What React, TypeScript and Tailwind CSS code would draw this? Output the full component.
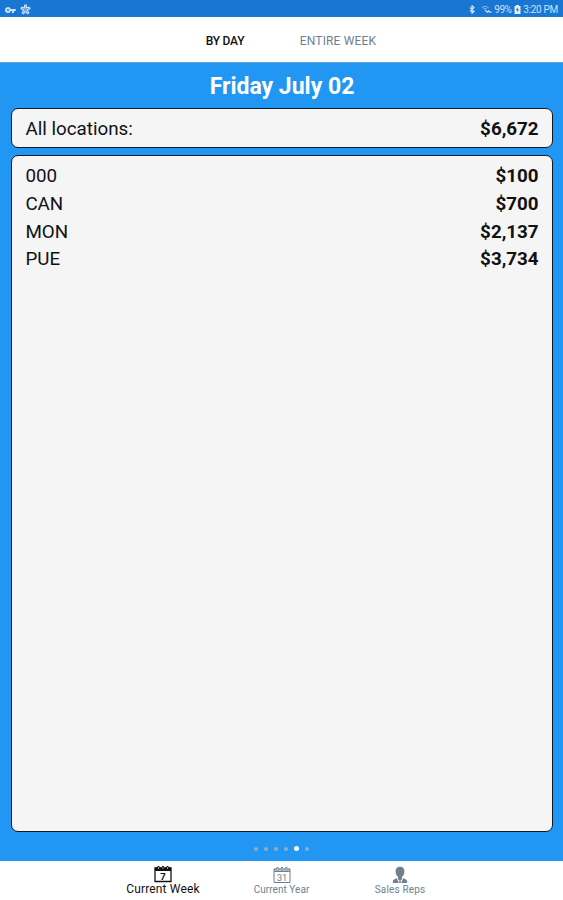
import React from 'react';

const rows: [string, string][] = [
  ['000', '$100'],
  ['CAN', '$700'],
  ['MON', '$2,137'],
  ['PUE', '$3,734'],
];

function StatusBar() {
  return (
    <header className="flex h-[17px] shrink-0 items-center justify-between bg-[#1976d2] px-[5px] pt-[2px] text-[#c9e0f6]">
      <div className="flex items-center gap-[4px]">
        <svg width="11" height="8" viewBox="0 0 11 8" fill="currentColor">
          <path fillRule="evenodd" d="M3 1a3 3 0 1 0 2.8 4H7v2h2V5h1.8V3h-5A3 3 0 0 0 3 1Zm0 2a1 1 0 1 1 0 2 1 1 0 0 1 0-2Z" />
        </svg>
        <svg width="11" height="11" viewBox="0 0 11 11" fill="none" stroke="currentColor" strokeWidth="1.1" strokeLinejoin="round">
          <path d="M4.6 3.6V1h1.8v2.6l3.2-.3.4 1.4-2.7 1.1 1.6 3.1-1.3.9-2.1-2.5-2.1 2.5-1.3-.9 1.6-3.1L1 4.7l.4-1.4Z" fill="currentColor" fillOpacity=".45" />
        </svg>
      </div>
      <div className="flex items-center text-[10px] leading-none">
        <svg className="mr-[6px]" width="6" height="9" viewBox="0 0 6 9" fill="none" stroke="currentColor" strokeWidth="1.2">
          <path d="m1 2.5 4 4-2 1.8V.7l2 1.8-4 4" />
        </svg>
        <svg className="mr-[2px]" width="11" height="9" viewBox="0 0 11 9" fill="none" stroke="currentColor">
          <path d="M.7 2.5Q4 .2 7.5 2.4M2 4.2q2-1.4 4 0" opacity=".65" />
          <path d="m4 5.2 2.5 2 1-1.4 1 1.4h2" strokeWidth="1.2" />
        </svg>
        <span className="inline-block w-[18px] whitespace-nowrap tracking-[-0.5px]">99%</span>
        <svg className="mr-[2px] ml-[2px]" width="7" height="9" viewBox="0 0 7 9">
          <path d="M2 0h3v1h1.5v8h-6V1H2Z" fill="#e3f0fb" />
          <path d="M3.8 2.2 1.8 5h1.5l-.3 2.3L5.2 4.5H3.7Z" fill="#28679d" />
        </svg>
        <span className="whitespace-nowrap tracking-[-0.3px]">3:20 PM</span>
      </div>
    </header>
  );
}

function CalendarIcon({ day, bold }: { day: string; bold?: boolean }) {
  return (
    <svg width="18" height="18" viewBox="0 0 18 18" fill="none" stroke="currentColor">
      <path d="M1 3h16v13.5H1Z" strokeWidth={bold ? 1.3 : 1} />
      <path d="M1 2.5h16v3H1Z" fill="currentColor" fillOpacity={bold ? 1 : 0.45} stroke="none" />
      <path d="M1 5.5h16" />
      <path d="M4.5 1v3.5M9 1v3.5M13.5 1v3.5" strokeWidth="1.8" />
      <path d="M4.5 2v2M9 2v2M13.5 2v2" stroke="white" strokeWidth=".6" />
      <text x="9" y="14.5" textAnchor="middle" fill="currentColor" stroke="none" fontSize={9.5} fontWeight={bold ? 700 : 400}>{day}</text>
    </svg>
  );
}

function PersonIcon() {
  return (
    <svg width="16" height="18" viewBox="0 0 16 18" fill="currentColor">
      <path d="M8 .8C5 .8 3.5 2.8 3.6 5.5c0 2.5 1 4.5 2.5 5.4v1.3l-.6.5L8 15l2.5-2.3-.6-.5v-1.3c1.5-.9 2.5-2.9 2.5-5.4C12.5 2.8 11 .8 8 .8Z" />
      <path d="M4.8 12.3 2 13.6C1.1 14.1.8 15.5.8 17h6.1Z" />
      <path d="m11.2 12.3 2.8 1.3c.9.5 1.2 1.9 1.2 3.4H9.1Z" />
      <path d="m8 14.5-1 1 .5 1.5h1l.5-1.5Z" />
    </svg>
  );
}

export default function App() {
  return (
    <div className="flex h-[900px] w-[563px] flex-col overflow-hidden bg-white font-['Roboto',sans-serif]">
      <StatusBar />
      <nav className="flex h-[46px] shrink-0 items-center justify-center border-b border-[#6da0cc] pt-[2px] text-[12px]">
        <span className="flex w-[113px] justify-center font-medium tracking-[-0.2px] whitespace-nowrap text-[#111]">BY DAY</span>
        <span className="flex w-[113px] justify-center tracking-[0.15px] whitespace-nowrap text-[#708090]">ENTIRE WEEK</span>
      </nav>
      <main className="flex h-[798px] shrink-0 flex-col bg-[#2196f3] pr-[10px] pl-[11px] text-[18.8px] text-[#111]">
        <h1 className="flex h-[45px] shrink-0 items-center justify-center pt-[3px] text-[23px] font-bold text-white">Friday July 02</h1>
        <section className="flex h-[40px] shrink-0 items-center justify-between rounded-[7px] border-[1.5px] border-[#101a22] bg-[#f5f5f5] px-[13.4px] pt-[3px]">
          <span>All locations:</span>
          <span className="font-bold">$6,672</span>
        </section>
        <section className="mt-[7px] h-[677px] shrink-0 rounded-[7px] border-[1.5px] border-[#101a22] bg-[#f5f5f5] px-[13.4px] pt-[6.5px]">
          {rows.map(([name, amount]) => (
            <div key={name} className="flex h-[27.7px] items-center justify-between">
              <span>{name}</span>
              <span className="font-bold">{amount}</span>
            </div>
          ))}
        </section>
        <div className="flex flex-1 items-center justify-center gap-[6px] pt-[4px] pr-px">
          {[0, 1, 2, 3, 4, 5].map((i) => (
            <i key={i} className={i === 4 ? 'size-[5px] rounded-full bg-white' : 'size-[4px] rounded-full bg-[#94abc0]'} />
          ))}
        </div>
      </main>
      <footer className="flex flex-1 justify-center text-[#708090]">
        <div className="flex w-[118.5px] flex-col items-center pt-[4px] text-[#111]">
          <CalendarIcon day="7" bold />
          <span className="text-[12px] leading-[13px] tracking-[0.15px] whitespace-nowrap">Current Week</span>
        </div>
        <div className="flex w-[118.5px] flex-col items-center pt-[5px]">
          <CalendarIcon day="31" />
          <span className="text-[10px] leading-[12px] tracking-[0.05px] whitespace-nowrap">Current Year</span>
        </div>
        <div className="flex w-[118.5px] flex-col items-center pt-[5px]">
          <PersonIcon />
          <span className="text-[10px] leading-[12px] tracking-[0.15px] whitespace-nowrap">Sales Reps</span>
        </div>
      </footer>
    </div>
  );
}
